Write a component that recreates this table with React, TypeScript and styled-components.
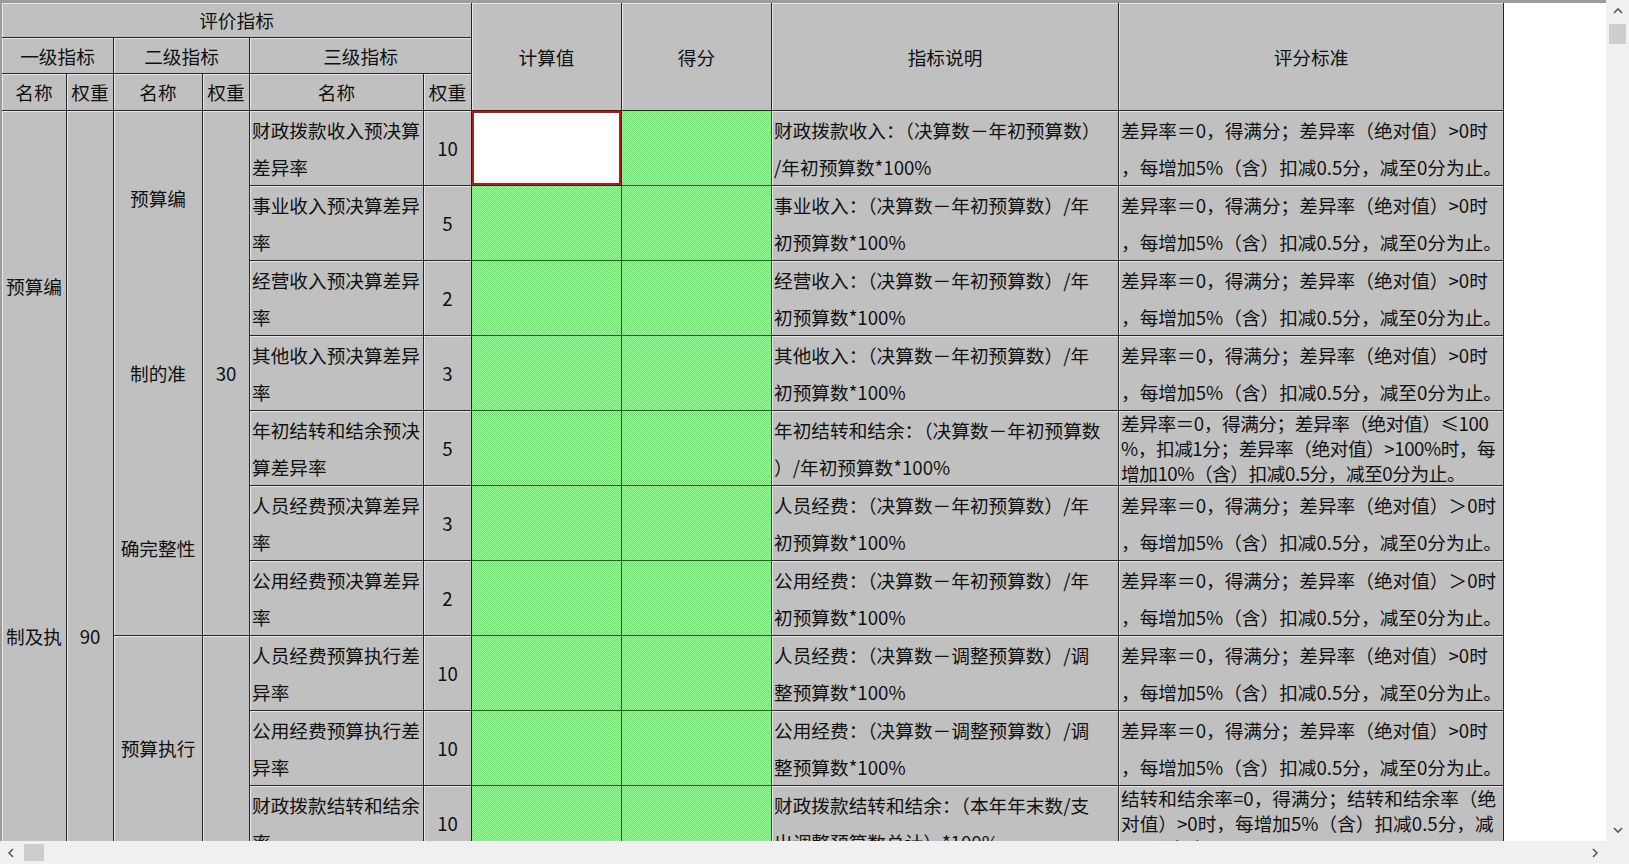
import React from "react";
import styled, { createGlobalStyle, css } from "styled-components";

const GlobalStyle = createGlobalStyle`
  html, body { margin: 0; padding: 0; overflow: hidden; background: #ffffff; }
  #root { width: 100vw; height: 100vh; }
`;

const FONT = `"Noto Sans CJK SC", "Noto Sans", sans-serif`;

const Frame = styled.div`
  display: grid;
  grid-template-columns: 1fr 23px;
  grid-template-rows: 1fr 23px;
  width: 100vw;
  height: 100vh;
  background: #f0f0f0;
`;

const Pane = styled.div`
  overflow: hidden;
  background: #ffffff;
  border-top: 3px solid #9c9c9c;
  border-left: 2px solid #9c9c9c;
  min-width: 0;
  min-height: 0;
`;

const Sheet = styled.div`
  display: grid;
  grid-template-columns: 65px 47px 89px 47px 174px 48px 150px 150px 347px 385px;
  grid-template-rows: 35px 36px 37px repeat(14, 75px);
  width: max-content;
  font-family: ${FONT};
  font-size: 18.67px;
  color: #111111;
`;

type Tone = "gray" | "green" | "active";

interface CellProps {
  $col: number;
  $row: number;
  $colSpan?: number;
  $rowSpan?: number;
  $tone?: Tone;
  $tight?: boolean;
}

const toneStyles = {
  gray: css`
    background: #c0c0c0;
    border-right: 1px solid #262626;
    border-bottom: 1px solid #262626;
    box-shadow: inset 1px 1px 0 #e6e6e6;
  `,
  green: css`
    background-color: #88f888;
    background-image: repeating-conic-gradient(#70e070 0 25%, #9aff9a 0 50%);
    background-size: 2px 2px;
    border-right: 1px solid #2a5a2a;
    border-bottom: 1px solid #2a5a2a;
  `,
  active: css`
    background: #ffffff;
    border-right: 1px solid #262626;
    border-bottom: 1px solid #262626;
    box-shadow: inset 0 0 0 2px #b41818;
  `,
};

const Cell = styled.div<CellProps>`
  grid-column: ${(p) => p.$col} / span ${(p) => p.$colSpan ?? 1};
  grid-row: ${(p) => p.$row} / span ${(p) => p.$rowSpan ?? 1};
  display: flex;
  flex-direction: column;
  padding: 0 2px;
  min-width: 0;
  min-height: 0;
  overflow: hidden;
  box-sizing: border-box;
  letter-spacing: ${(p) => (p.$tight ? "-0.45px" : "0")};
  ${(p) => toneStyles[p.$tone ?? "gray"]}
`;

const Band = styled.div<{ $align?: "left" | "center" }>`
  flex: 1 1 0;
  display: flex;
  align-items: center;
  justify-content: ${(p) => (p.$align === "left" ? "flex-start" : "center")};
  white-space: nowrap;
  line-height: 24px;
  min-height: 0;
`;

const Track = styled.div<{ $vertical?: boolean }>`
  display: flex;
  flex-direction: ${(p) => (p.$vertical ? "column" : "row")};
  align-items: center;
  background: #f0f0f0;
`;

const ArrowBox = styled.div<{ $vertical?: boolean }>`
  flex: none;
  width: ${(p) => (p.$vertical ? "23px" : "22px")};
  height: ${(p) => (p.$vertical ? "22px" : "23px")};
  display: flex;
  align-items: center;
  justify-content: center;
`;

const Thumb = styled.div<{ $vertical?: boolean }>`
  flex: none;
  background: #cdcdcd;
  ${(p) =>
    p.$vertical
      ? css`
          width: 17px;
          height: 20px;
          margin-top: 2px;
        `
      : css`
          width: 20px;
          height: 17px;
          margin-left: 2px;
        `}
`;

const Spacer = styled.div`
  flex: 1 1 auto;
`;

const Corner = styled.div`
  background: #f0f0f0;
`;

const Chevron: React.FC<{ dir: "up" | "down" | "left" | "right" }> = ({ dir }) => {
  const pts = {
    up: "1,7 5,3 9,7",
    down: "1,3 5,7 9,3",
    left: "7,1 3,5 7,9",
    right: "3,1 7,5 3,9",
  }[dir];
  return (
    <svg width="10" height="10" viewBox="0 0 10 10">
      <polyline points={pts} fill="none" stroke="#5a5a5a" strokeWidth="1.6" />
    </svg>
  );
};

interface RowData {
  name: string[];
  weight: string;
  desc: string[];
  std: string[];
  tight?: boolean;
}

const STD_A = ["差异率＝0，得满分；差异率（绝对值）>0时", "，每增加5%（含）扣减0.5分，减至0分为止。"];
const STD_B = ["差异率＝0，得满分；差异率（绝对值）＞0时", "，每增加5%（含）扣减0.5分，减至0分为止。"];

const ROWS: RowData[] = [
  {
    name: ["财政拨款收入预决算", "差异率"],
    weight: "10",
    desc: ["财政拨款收入：（决算数－年初预算数）", "/年初预算数*100%"],
    std: STD_A,
  },
  {
    name: ["事业收入预决算差异", "率"],
    weight: "5",
    desc: ["事业收入：（决算数－年初预算数）/年", "初预算数*100%"],
    std: STD_A,
  },
  {
    name: ["经营收入预决算差异", "率"],
    weight: "2",
    desc: ["经营收入：（决算数－年初预算数）/年", "初预算数*100%"],
    std: STD_A,
  },
  {
    name: ["其他收入预决算差异", "率"],
    weight: "3",
    desc: ["其他收入：（决算数－年初预算数）/年", "初预算数*100%"],
    std: STD_A,
  },
  {
    name: ["年初结转和结余预决", "算差异率"],
    weight: "5",
    desc: ["年初结转和结余：（决算数－年初预算数", "）/年初预算数*100%"],
    std: [
      "差异率＝0，得满分；差异率（绝对值）≤100",
      "%，扣减1分；差异率（绝对值）>100%时，每",
      "增加10%（含）扣减0.5分，减至0分为止。",
    ],
    tight: true,
  },
  {
    name: ["人员经费预决算差异", "率"],
    weight: "3",
    desc: ["人员经费：（决算数－年初预算数）/年", "初预算数*100%"],
    std: STD_B,
  },
  {
    name: ["公用经费预决算差异", "率"],
    weight: "2",
    desc: ["公用经费：（决算数－年初预算数）/年", "初预算数*100%"],
    std: STD_B,
  },
  {
    name: ["人员经费预算执行差", "异率"],
    weight: "10",
    desc: ["人员经费：（决算数－调整预算数）/调", "整预算数*100%"],
    std: STD_A,
  },
  {
    name: ["公用经费预算执行差", "异率"],
    weight: "10",
    desc: ["公用经费：（决算数－调整预算数）/调", "整预算数*100%"],
    std: STD_A,
  },
  {
    name: ["财政拨款结转和结余", "率"],
    weight: "10",
    desc: ["财政拨款结转和结余：（本年年末数/支", "出调整预算数总计）*100%"],
    std: ["结转和结余率=0，得满分；结转和结余率（绝", "对值）>0时，每增加5%（含）扣减0.5分，减", "至0分为止。"],
  },
];

const Bands: React.FC<{ lines: string[]; align?: "left" | "center" }> = ({ lines, align }) => (
  <>
    {lines.map((l, i) => (
      <Band key={i} $align={align}>
        {l}
      </Band>
    ))}
  </>
);

const Header: React.FC = () => (
  <>
    <Cell $col={1} $row={1} $colSpan={6}>
      <Band>评价指标</Band>
    </Cell>
    <Cell $col={7} $row={1} $rowSpan={3}>
      <Band>计算值</Band>
    </Cell>
    <Cell $col={8} $row={1} $rowSpan={3}>
      <Band>得分</Band>
    </Cell>
    <Cell $col={9} $row={1} $rowSpan={3}>
      <Band>指标说明</Band>
    </Cell>
    <Cell $col={10} $row={1} $rowSpan={3}>
      <Band>评分标准</Band>
    </Cell>
    <Cell $col={1} $row={2} $colSpan={2}>
      <Band>一级指标</Band>
    </Cell>
    <Cell $col={3} $row={2} $colSpan={2}>
      <Band>二级指标</Band>
    </Cell>
    <Cell $col={5} $row={2} $colSpan={2}>
      <Band>三级指标</Band>
    </Cell>
    {["名称", "权重", "名称", "权重", "名称", "权重"].map((t, i) => (
      <Cell key={i} $col={i + 1} $row={3}>
        <Band>{t}</Band>
      </Cell>
    ))}
  </>
);

const Merged: React.FC = () => (
  <>
    <Cell $col={1} $row={4} $rowSpan={14}>
      <Bands lines={["预算编", "制及执", "行情况"]} />
    </Cell>
    <Cell $col={2} $row={4} $rowSpan={14}>
      <Band>90</Band>
    </Cell>
    <Cell $col={3} $row={4} $rowSpan={7}>
      <Bands lines={["预算编", "制的准", "确完整性"]} />
    </Cell>
    <Cell $col={4} $row={4} $rowSpan={7}>
      <Band>30</Band>
    </Cell>
    <Cell $col={3} $row={11} $rowSpan={3}>
      <Band>预算执行</Band>
    </Cell>
    <Cell $col={4} $row={11} $rowSpan={3} />
  </>
);

const DataRows: React.FC = () => (
  <>
    {ROWS.map((r, i) => {
      const row = i + 4;
      return (
        <React.Fragment key={i}>
          <Cell $col={5} $row={row}>
            <Bands lines={r.name} align="left" />
          </Cell>
          <Cell $col={6} $row={row}>
            <Band>{r.weight}</Band>
          </Cell>
          <Cell $col={7} $row={row} $tone={i === 0 ? "active" : "green"} />
          <Cell $col={8} $row={row} $tone="green" />
          <Cell $col={9} $row={row}>
            <Bands lines={r.desc} align="left" />
          </Cell>
          <Cell $col={10} $row={row} $tight={r.tight}>
            <Bands lines={r.std} align="left" />
          </Cell>
        </React.Fragment>
      );
    })}
  </>
);

export default function App() {
  return (
    <>
      <GlobalStyle />
      <Frame>
        <Pane>
          <Sheet>
            <Header />
            <Merged />
            <DataRows />
          </Sheet>
        </Pane>
        <Track $vertical>
          <ArrowBox $vertical>
            <Chevron dir="up" />
          </ArrowBox>
          <Thumb $vertical />
          <Spacer />
          <ArrowBox $vertical>
            <Chevron dir="down" />
          </ArrowBox>
        </Track>
        <Track>
          <ArrowBox>
            <Chevron dir="left" />
          </ArrowBox>
          <Thumb />
          <Spacer />
          <ArrowBox>
            <Chevron dir="right" />
          </ArrowBox>
        </Track>
        <Corner />
      </Frame>
    </>
  );
}
